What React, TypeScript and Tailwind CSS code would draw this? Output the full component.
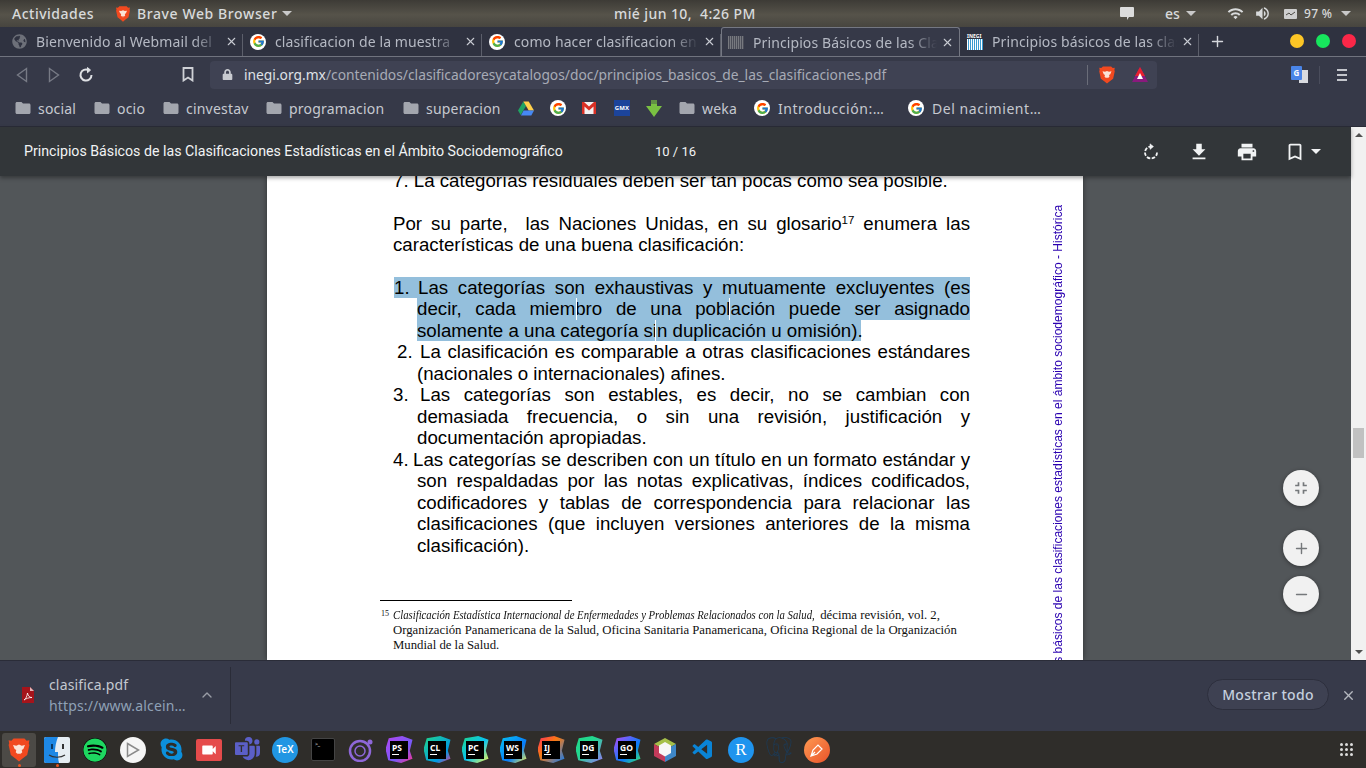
import React from 'react';
import { ChevronUp, Plus, Minus, X } from 'lucide-react';
import { FcGoogle } from 'react-icons/fc';
import { FaGlobeAmericas, FaSpotify, FaSkype, FaLock } from 'react-icons/fa';
import { BsMicrosoftTeams } from 'react-icons/bs';
import { MdFolder, MdWifi, MdVolumeUp, MdFileDownload, MdPrint, MdBookmarkBorder, MdFullscreenExit, MdVideocam } from 'react-icons/md';
import { SiPostgresql } from 'react-icons/si';
import { VscVscode } from 'react-icons/vsc';

const BraveIcon = ({ size, className }: { size: number; className?: string }) => (
  <svg width={size} height={size} viewBox="0 0 20 22" className={className}>
    <path d="M5 0.500h10l2 2 2.500-0.500-0.500 3 0.500 1.500-2 9-4.500 3.500L10 21.500 7 19 2.500 15.500l-2-9L1 5 0.500 2 3 2.500z" fill="#f1491f" />
    <path d="M4.500 6.500l3 0.500L10 6l2.500 1 3-0.500-1.500 3.500-1.500 1 0.500 2-3 3-3-3 0.500-2-1.500-1z" fill="#fbe3d6" />
    <path d="M8 14.500h4L10 17z" fill="#f1491f" />
  </svg>
);

const GoogleIcon = () => (
  <span className="flex h-4 w-4 shrink-0 items-center justify-center rounded-full bg-white">
    <FcGoogle size={13} />
  </span>
);

const InegiIcon = ({ muted }: { muted?: boolean }) => (
  <span className="flex h-4 w-4 shrink-0 flex-col">
    {!muted && <span className="text-[5px] leading-[5px] font-bold text-white">INEGI</span>}
    <span className={muted ? 'mt-[2px] h-[13px] w-4 bg-[repeating-linear-gradient(90deg,#77797f_0,#77797f_1px,#4b4d58_1px,#4b4d58_2px)]' : 'h-[11px] w-4 bg-[repeating-linear-gradient(90deg,#ffffff_0,#ffffff_1px,#3a9bd0_1px,#3a9bd0_2px)]'} />
  </span>
);

const tabs = [
  { title: 'Bienvenido al Webmail del', icon: <FaGlobeAmericas size={15} className="text-[#6d7079]" /> },
  { title: 'clasificacion de la muestra', icon: <GoogleIcon /> },
  { title: 'como hacer clasificacion en', icon: <GoogleIcon /> },
  { title: 'Principios Básicos de las Cla', icon: <InegiIcon muted />, active: true },
  { title: 'Principios básicos de las clas', icon: <InegiIcon /> },
];

const tabsDivider = <span className="absolute right-0 bottom-0 h-[22px] w-px bg-[#5c5f6b]" />;

const Tab = ({ title, icon, active }: { title: string; icon: React.ReactNode; active?: boolean }) => (
  <div className={`relative flex h-full w-[239px] shrink-0 items-center pr-[5px] ${active ? 'z-10 -mb-px h-[30px] self-start rounded-t-[3px] border border-b-0 border-[#747782] bg-[#363948] pl-[6px]' : 'pl-[7px]'}`}>
    {!active && tabsDivider}
    <span className="flex w-4 shrink-0 justify-center">{icon}</span>
    <span className="ml-[9px] min-w-0 flex-1 overflow-hidden whitespace-nowrap text-[14px] tracking-[0.1px] text-[#b5b9c3] [mask-image:linear-gradient(90deg,#000_85%,transparent_100%)]">
      {title}
    </span>
    <X size={13} strokeWidth={2} className="ml-1 text-[#c9ccd3]" />
  </div>
);

const bookmarkRow: { label?: string; kind: string; w: number; wide?: boolean }[] = [
  { label: 'social', kind: 'folder', w: 79 },
  { label: 'ocio', kind: 'folder', w: 69 },
  { label: 'cinvestav', kind: 'folder', w: 103 },
  { label: 'programacion', kind: 'folder', w: 137 },
  { label: 'superacion', kind: 'folder', w: 116 },
  { kind: 'drive', w: 32 },
  { kind: 'google', w: 32 },
  { kind: 'gmail', w: 32 },
  { kind: 'gmx', w: 32 },
  { kind: 'arrow', w: 32 },
  { label: 'weka', kind: 'folder', w: 76 },
  { label: 'Introducción:…', kind: 'google', w: 154, wide: true },
  { label: 'Del nacimient…', kind: 'google', w: 150, wide: true },
];

const BookmarkIcon = ({ kind }: { kind: string }) => {
  if (kind === 'folder') return <MdFolder size={18} className="shrink-0 text-[#a3a6ae]" />;
  if (kind === 'google') return <GoogleIcon />;
  if (kind === 'drive')
    return (
      <svg width="16" height="15" viewBox="0 0 16 15" className="shrink-0">
        <polygon points="5.3,0.5 8,5 2.700,14 0,9.500" fill="#1fa463" />
        <polygon points="5.4,0.5 10.7,0.5 16,9.500 10.700,9.500" fill="#ffd04b" />
        <polygon points="2.900,14.500 5.600,9.500 16,9.500 13.300,14.500" fill="#4688f4" />
      </svg>
    );
  if (kind === 'gmail')
    return (
      <svg width="14" height="12" viewBox="0 0 14 12" className="shrink-0">
        <rect width="14" height="12" fill="#f2f2f2" />
        <path d="M0 0h2l5 4.500L12 0h2v12h-2.500V4.600L7 8.400 2.500 4.600V12H0z" fill="#d93025" />
      </svg>
    );
  if (kind === 'gmx')
    return <span className="flex h-4 w-4 shrink-0 items-center justify-center bg-[#1c449b] text-[6px] font-bold text-white">GMX</span>;
  return (
    <svg width="16" height="17" viewBox="0 0 16 17" className="shrink-0">
      <path d="M5 0h6v6h5l-8 11L0 6h5z" fill="#7ac142" />
      <path d="M3 3h10M3 1h10" stroke="#383b49" strokeWidth="0.7" />
    </svg>
  );
};

const Line = ({ children, left = 0, justify = true, selected }: { children: React.ReactNode; left?: number; justify?: boolean; selected?: boolean }) => (
  <div
    className={`relative h-[21.5px] whitespace-pre text-[18.7px] leading-[21.5px] text-black ${justify ? '[text-align-last:justify]' : ''} ${selected ? 'bg-[#94bfdc]' : ''}`}
    style={{ marginLeft: left }}
  >
    {children}
  </div>
);

const JetIcon = ({ label, bg }: { label: string; bg: string }) => (
  <span className="relative flex h-[27px] w-[27px] items-center justify-center">
    <span className={`absolute inset-0 [clip-path:polygon(12%_8%,62%_0,100%_14%,90%_55%,100%_84%,58%_100%,10%_90%,0_48%)] ${bg}`} />
    <span className="relative flex h-[18px] w-[18px] flex-col bg-black px-[2px] pt-[2px] text-[8.5px] leading-[9px] font-bold text-white">
      {label}
      <span className="mt-[2px] h-px w-[7px] bg-white" />
    </span>
  </span>
);

const dockIcons: React.ReactNode[] = [
  <BraveIcon size={24} />,
  <svg width="26" height="26" viewBox="0 0 26 26">
    <rect width="26" height="26" rx="2" fill="#e6edf2" />
    <path d="M2 0h12c-2 5-3 10-3 15h3c0 4 0 7 1 11H2a2 2 0 0 1-2-2V2a2 2 0 0 1 2-2z" fill="#1e88e5" />
    <rect x="7" y="7" width="2" height="5" fill="#0b3a66" />
    <rect x="18" y="7" width="2" height="5" fill="#333" />
    <path d="M5 18c4 3 12 3 16 0" stroke="#333" strokeWidth="1.200" fill="none" />
  </svg>,
  <FaSpotify size={24} className="rounded-full bg-black text-[#1ed760]" />,
  <span className="flex h-[26px] w-[26px] items-center justify-center rounded-full bg-[#f5f5f5]">
    <svg width="14" height="16" viewBox="0 0 14 16"><path d="M1.500 1.500L12.500 8 1.500 14.500z" fill="none" stroke="#8a8a8a" strokeWidth="1.500" /></svg>
  </span>,
  <FaSkype size={25} className="text-[#0c8fdb]" />,
  <span className="flex h-[22px] w-[26px] items-center justify-center rounded-[2px] bg-[#e54b4b]"><MdVideocam size={18} className="text-white" /></span>,
  <BsMicrosoftTeams size={25} className="text-[#5b5fc7]" />,
  <span className="flex h-[26px] w-[26px] items-center justify-center rounded-full bg-[#2196e3] text-[10px] font-semibold text-white">TeX</span>,
  <span className="flex h-[23px] w-[24px] items-start rounded-[2px] border border-[#444] bg-black pl-[3px] pt-[3px]"><span className="text-[5px] leading-[5px] text-white">&gt;_</span></span>,
  <svg width="26" height="24" viewBox="0 0 26 24">
    <circle cx="12" cy="13" r="10" fill="none" stroke="#8e67d8" strokeWidth="2.500" />
    <circle cx="12" cy="13" r="5" fill="none" stroke="#8e67d8" strokeWidth="1.500" />
    <circle cx="22" cy="4" r="2.500" fill="#8e67d8" />
  </svg>,
  <JetIcon label="PS" bg="bg-[linear-gradient(135deg,#b345f1,#765af8_60%,#ff318c)]" />,
  <JetIcon label="CL" bg="bg-[linear-gradient(135deg,#21d789,#009ae5_70%,#ed358c)]" />,
  <JetIcon label="PC" bg="bg-[linear-gradient(135deg,#21d789,#07c3f2_50%,#fcf84a)]" />,
  <JetIcon label="WS" bg="bg-[linear-gradient(135deg,#07c3f2,#087cfa_60%,#fcf84a)]" />,
  <JetIcon label="IJ" bg="bg-[linear-gradient(135deg,#fe315d,#f97a12_40%,#087cfa)]" />,
  <JetIcon label="DG" bg="bg-[linear-gradient(135deg,#21d789,#22d88f_40%,#9775f8)]" />,
  <JetIcon label="GO" bg="bg-[linear-gradient(135deg,#b74af7,#087cfa_60%,#3bea62)]" />,
  <svg width="24" height="26" viewBox="0 0 24 26">
    <polygon points="12,1 23,7 12,13 1,7" fill="#a6c04a" />
    <polygon points="1,7 12,13 12,25 1,19" fill="#c23a5a" />
    <polygon points="23,7 12,13 12,25 23,19" fill="#3e87c9" />
    <polygon points="12,5 18,8.500 18,16 12,19.500 6,16 6,8.500" fill="#f7f7f7" />
  </svg>,
  <VscVscode size={24} className="text-[#0a84d6]" />,
  <span className="flex h-[26px] w-[26px] items-center justify-center rounded-full bg-[#1f94ee] font-['Liberation_Serif',serif] text-[17px] text-white">R</span>,
  <SiPostgresql size={26} className="text-[#1d3a55]" />,
  <span className="flex h-[26px] w-[26px] items-center justify-center rounded-full bg-[linear-gradient(135deg,#ff9a52,#e9532a)]">
    <svg width="18" height="18" viewBox="0 0 18 18"><path d="M3 15l2-6 5-5 4 4-5 5z M3 15l4-4" stroke="#fff" strokeWidth="1.200" fill="none" /></svg>
  </span>,
];

const App = () => {
  return (
    <div className="flex h-[768px] w-[1366px] flex-col overflow-hidden bg-[#363948] font-['Noto_Sans',sans-serif]">
      {/* gnome top bar */}
      <div className="flex h-[27px] shrink-0 items-center bg-[linear-gradient(180deg,#3d3b36,#56534a_55%,#47453f)] text-[14px] font-medium text-[#d8dadb]">
        <span className="ml-3 w-[83px] tracking-[0.5px]">Actividades</span>
        <BraveIcon size={16} className="ml-5" />
        <span className="ml-[6px] w-[140px] whitespace-nowrap tracking-[0.6px]">Brave Web Browser</span>
        <span className="ml-[5px] h-0 w-0 border-x-[5px] border-t-[5px] border-x-transparent border-t-[#c9c9c9]" />
        <span className="ml-[322px] w-[138px] whitespace-pre text-center tracking-[0.4px]">mié jun 10,  4:26 PM</span>
        <svg width="16" height="16" viewBox="0 0 16 16" className="ml-[367px] text-[#dcdcdc]">
          <path d="M2 1h12a1 1 0 0 1 1 1v8a1 1 0 0 1-1 1h-4l-2 3v-3H2a1 1 0 0 1-1-1V2a1 1 0 0 1 1-1z" fill="currentColor" />
        </svg>
        <span className="ml-[30px] w-[16px]">es</span>
        <span className="ml-[5px] h-0 w-0 border-x-[5px] border-t-[5px] border-x-transparent border-t-[#c9c9c9]" />
        <MdWifi size={17} className="ml-[31px]" />
        <MdVolumeUp size={17} className="ml-[10px]" />
        <svg width="14" height="10" viewBox="0 0 14 10" className="ml-[13px]">
          <rect width="13" height="10" rx="1" fill="#cfcfcf" />
          <path d="M2 6l3-2 2 2 4-3" stroke="#4d4b45" fill="none" />
        </svg>
        <span className="ml-[6px] whitespace-nowrap text-[12px] tracking-[0.3px]">97 %</span>
        <span className="ml-[9px] h-0 w-0 border-x-[5px] border-t-[5px] border-x-transparent border-t-[#c9c9c9]" />
      </div>

      {/* tabs */}
      <div className="flex h-[30px] shrink-0 items-end border-b border-[#70737e] bg-[#2f3240] pl-[4px]">
        {tabs.map((tab) => (
          <Tab key={tab.title} title={tab.title} icon={tab.icon} active={tab.active} />
        ))}
        <Plus size={17} strokeWidth={2} className="mb-[6px] ml-[10px] text-[#d5d7dc]" />
        <div className="mb-[8px] ml-auto flex gap-3 pr-[10px]">
          <span className="h-[14px] w-[14px] rounded-full bg-[#fdc626]" />
          <span className="h-[14px] w-[14px] rounded-full bg-[#17e65d]" />
          <span className="h-[14px] w-[14px] rounded-full bg-[#fb2748]" />
        </div>
      </div>

      {/* address bar */}
      <div className="flex h-[35px] shrink-0 items-center">
        <svg width="12" height="16" viewBox="0 0 12 16" className="ml-[16px]" fill="none" stroke="#777a85" strokeWidth="1.400">
          <path d="M10.500 1.500v13L1.500 8z" />
        </svg>
        <svg width="12" height="16" viewBox="0 0 12 16" className="ml-[20px]" fill="none" stroke="#777a85" strokeWidth="1.400">
          <path d="M1.500 1.500v13l9-6.500z" />
        </svg>
        <svg width="16" height="16" viewBox="0 0 16 16" className="ml-[18px]" fill="none" stroke="#dfe1e5" strokeWidth="2">
          <path d="M13.500 8A5.500 5.500 0 1 1 10.500 3.100" />
          <path d="M9.500 0.500l3 2.600-3 2.600z" fill="#dfe1e5" strokeWidth="1" />
        </svg>
        <svg width="12" height="15" viewBox="0 0 12 15" className="ml-[88px]" fill="none" stroke="#cfd1d6" strokeWidth="1.800">
          <path d="M1.500 1h9v12.500L6 10.500l-4.500 3z" />
        </svg>
        <div className="ml-[16px] flex h-[28px] w-[947px] items-center rounded-[4px] bg-[#3f4253]">
          <FaLock size={11} className="ml-[12px] text-[#c8cad0]" />
          <span className="ml-[11px] w-[643px] whitespace-nowrap pt-px text-[13.8px] text-[#a7abb6]">
            <span className="text-[#dfe1e6]">inegi.org.mx</span>/contenidos/clasificadoresycatalogos/doc/principios_basicos_de_las_clasificaciones.pdf
          </span>
          <span className="ml-[200px] h-[20px] w-px bg-[#6a6d79]" />
          <BraveIcon size={18} className="ml-[10px]" />
          <svg width="18" height="18" viewBox="0 0 18 18" className="ml-[15px]">
            <polygon points="9,1 17,16 1,16" fill="#8a1a7d" />
            <polygon points="9,1 14,10 4,10" fill="#e8202f" />
            <polygon points="9,7 12,13 6,13" fill="#fff" />
          </svg>
        </div>
        <span className="relative ml-[134px] flex h-[17px] w-[17px] items-center justify-center">
          <span className="absolute right-0 bottom-0 h-[13px] w-[9px] bg-[#d9dbe0]" />
          <span className="absolute top-0 left-0 h-[14px] w-[11px] rounded-[1px] bg-[#4a85e8] text-center text-[8px] leading-[14px] font-bold text-white">G</span>
        </span>
        <span className="ml-[11px] h-[18px] w-px bg-[#4a4d5c]" />
        <span className="ml-[17px] flex w-[10px] flex-col gap-[3px]">
          <span className="h-[2px] bg-[#c4c6cc]" />
          <span className="h-[2px] bg-[#c4c6cc]" />
          <span className="h-[2px] bg-[#c4c6cc]" />
        </span>
      </div>

      {/* bookmarks */}
      <div className="flex h-[35px] shrink-0 items-center border-b border-[#2a2c38] pb-[2px] pl-[13px] text-[14px] tracking-[0.2px] text-[#c6c9d0]">
        {bookmarkRow.map((b, i) => (
          <div key={i} className="flex shrink-0 items-center gap-[6px] pl-[1px]" style={{ width: b.w }}>
            <BookmarkIcon kind={b.kind} />
            {b.label && <span className={`whitespace-nowrap ${b.wide ? 'ml-[2px] tracking-[0.55px]' : ''}`}>{b.label}</span>}
          </div>
        ))}
      </div>

      {/* pdf viewer */}
      <div className="flex min-h-0 flex-1">
        <div className="relative flex min-w-0 flex-1 flex-col">
          <div className="relative z-10 flex h-[49px] shrink-0 items-center bg-[#323639] pl-6 font-['Roboto',sans-serif] text-[13px] text-[#f1f3f4] shadow-[0_2px_4px_rgba(0,0,0,0.35)]">
            <span className="w-[631px] whitespace-nowrap text-[14.2px]">Principios Básicos de las Clasificaciones Estadísticas en el Ámbito Sociodemográfico</span>
            <span className="w-[40px] whitespace-nowrap">10 / 16</span>
            <svg width="18" height="18" viewBox="0 0 18 18" className="ml-[447px]" fill="none" stroke="#f1f3f4" strokeWidth="1.800">
              <path d="M15 9.500A6 6 0 1 1 8 3.600" strokeDasharray="3.500 1.500" />
              <path d="M8 0.800l3.500 2.800L8 6.400z" fill="#f1f3f4" strokeWidth="0.500" />
            </svg>
            <MdFileDownload size={22} className="ml-[28px] text-[#f1f3f4]" />
            <MdPrint size={22} className="ml-[26px] text-[#f1f3f4]" />
            <MdBookmarkBorder size={22} className="ml-[26px] text-[#f1f3f4]" />
            <span className="ml-[5px] h-0 w-0 border-x-[5px] border-t-[5px] border-x-transparent border-t-[#f1f3f4]" />
          </div>

          <div className="flex min-h-0 flex-1 justify-center overflow-hidden bg-[#525659] pr-px">
            <div className="flex h-full w-[816px] shrink-0 bg-white pl-[126px] shadow-[0_0_6px_rgba(0,0,0,0.45)]">
              <div className="-mt-[6px] w-[577px] shrink-0 font-['Liberation_Sans',sans-serif]">
                <Line justify={false}>7. La categorías residuales deben ser tan pocas como sea posible.</Line>
                <div className="mt-[21px]">
                  <Line>Por su parte,  las Naciones Unidas, en su glosario<sup className="text-[11.5px]">17</sup> enumera las</Line>
                  <Line justify={false}>características de una buena clasificación:</Line>
                </div>
                <div className="mt-[21px]">
                  <div className="relative ml-px flex h-[21.5px] bg-[#94bfdc] text-[18.7px] leading-[21.5px] whitespace-pre text-black">
                    <span className="w-[24px] shrink-0">1.</span>
                    <span className="flex-1 [text-align-last:justify]">Las categorías son exhaustivas y mutuamente excluyentes (es</span>
                  </div>
                  <Line left={24} selected>
                    decir, cada miembro de una población puede ser asignado
                    <span className="absolute top-0 left-[159px] h-full w-px bg-white" />
                    <span className="absolute top-0 left-[312px] h-full w-px bg-white" />
                  </Line>
                  <div className="ml-[24px] h-[21.5px] w-[444px] bg-[#94bfdc]">
                    <Line justify={false}>
                      solamente a una categoría sin duplicación u omisión).
                      <span className="absolute top-0 left-[238px] h-full w-px bg-white" />
                    </Line>
                  </div>
                  <div className="flex h-[21.5px] text-[18.7px] leading-[21.5px] whitespace-pre">
                    <span className="w-[27px] shrink-0 pl-[4px]">2.</span>
                    <span className="flex-1 [text-align-last:justify]">La clasificación es comparable a otras clasificaciones estándares</span>
                  </div>
                  <Line left={24} justify={false}>(nacionales o internacionales) afines.</Line>
                  <div className="flex h-[21.5px] text-[18.7px] leading-[21.5px] whitespace-pre">
                    <span className="w-[27px] shrink-0">3.</span>
                    <span className="flex-1 [text-align-last:justify]">Las categorías son estables, es decir, no se cambian con</span>
                  </div>
                  <Line left={24}>demasiada frecuencia, o sin una revisión, justificación y</Line>
                  <Line left={24} justify={false}>documentación apropiadas.</Line>
                  <div className="flex h-[21.5px] text-[18.7px] leading-[21.5px] whitespace-pre">
                    <span className="w-[20px] shrink-0">4.</span>
                    <span className="flex-1 [text-align-last:justify]">Las categorías se describen con un título en un formato estándar y</span>
                  </div>
                  <Line left={24}>son respaldadas por las notas explicativas, índices codificados,</Line>
                  <Line left={24}>codificadores y tablas de correspondencia para relacionar las</Line>
                  <Line left={24}>clasificaciones (que incluyen versiones anteriores de la misma</Line>
                  <Line left={24} justify={false}>clasificación).</Line>
                </div>
                <div className="mt-[44px] -ml-[13px] h-px w-[192px] bg-black" />
                <div className="mt-[7px] -ml-[12px] w-[590px] font-['Liberation_Serif',serif] text-[12.75px] leading-[15px] text-[#111]">
                  <div className="flex">
                    <span className="w-[12px] shrink-0 text-[8px] leading-[11px]">15</span>
                    <span className="whitespace-nowrap"><i className="inline-block w-[424px] origin-left scale-x-[0.88] text-[12.2px]">Clasificación Estadística Internacional de Enfermedades y Problemas Relacionados con la Salud,</i> décima revisión, vol. 2,</span>
                  </div>
                  <div className="ml-[12px] whitespace-nowrap">Organización Panamericana de la Salud, Oficina Sanitaria Panamericana, Oficina Regional de la Organización</div>
                  <div className="ml-[12px]">Mundial de la Salud.</div>
                </div>
              </div>
              <div className="mt-[29px] ml-[81px] flex h-[455px] w-[14px] shrink-0 rotate-180 justify-end overflow-hidden font-['Liberation_Sans',sans-serif] text-[12.05px] leading-[14px] whitespace-pre text-[#2a00b0] [writing-mode:vertical-rl]">
                Principios básicos de las clasificaciones estadísticas en el ámbito sociodemográfico - Histórica
              </div>
            </div>
          </div>

          {/* zoom buttons */}
          <div className="absolute top-[343px] left-[1283px] flex h-9 w-9 items-center justify-center rounded-full bg-[#f1f1f1] shadow-[0_1px_4px_rgba(0,0,0,0.4)]">
            <MdFullscreenExit size={20} className="text-[#75787b]" />
          </div>
          <div className="absolute top-[403px] left-[1283px] flex h-9 w-9 items-center justify-center rounded-full bg-[#f1f1f1] shadow-[0_1px_4px_rgba(0,0,0,0.4)]">
            <Plus size={17} strokeWidth={2} className="text-[#75787b]" />
          </div>
          <div className="absolute top-[449px] left-[1283px] flex h-9 w-9 items-center justify-center rounded-full bg-[#f1f1f1] shadow-[0_1px_4px_rgba(0,0,0,0.4)]">
            <Minus size={17} strokeWidth={2} className="text-[#75787b]" />
          </div>
        </div>

        {/* scrollbar */}
        <div className="flex w-[15px] shrink-0 flex-col items-center bg-[#f1f1f1] pt-[6px]">
          <span className="h-0 w-0 border-x-[4px] border-b-[4px] border-x-transparent border-b-[#505050]" />
          <span className="mt-[291px] h-[30px] w-[11px] bg-[#c1c1c1]" />
          <span className="mt-[192px] h-0 w-0 border-x-[4px] border-t-[4px] border-x-transparent border-t-[#505050]" />
        </div>
      </div>

      {/* downloads shelf */}
      <div className="flex h-[71px] shrink-0 items-center border-t border-[#2a2c38] bg-[#373a4a] pb-[2px]">
        <svg width="12" height="16" viewBox="0 0 12 16" className="ml-[22px]">
          <path d="M0 0h8l4 4v12H0z" fill="#a5141b" />
          <path d="M8 0l4 4H8z" fill="#e8b4b6" />
          <path d="M2 13c2-1 3-4 3.500-7 0.500 3 2 4.500 4.500 4.500-3 0-6 1-8 2.500z" fill="none" stroke="#fff" strokeWidth="0.800" />
        </svg>
        <div className="ml-[15px] w-[140px] text-[14px] leading-[21px] tracking-[0.15px]">
          <div className="text-[#c4c8d0]">clasifica.pdf</div>
          <div className="whitespace-nowrap text-[#8fa1b6]">https://www.alcein…</div>
        </div>
        <ChevronUp size={16} className="ml-[10px] text-[#9a9da6]" />
        <span className="ml-[15px] h-[57px] w-px bg-[#2a2c38]" />
        <div className="mb-[2px] ml-auto flex h-[31px] w-[122px] items-center justify-center rounded-full border border-[#2d2f3d] bg-[#3e4152] text-[14px] font-medium tracking-[0.3px] text-[#c5d0de]">
          Mostrar todo
        </div>
        <X size={15} strokeWidth={2.2} className="mr-[10px] ml-[12px] text-[#b5b8bf]" />
      </div>

      {/* dock */}
      <div className="flex h-[37px] shrink-0 items-center bg-[#2f2d2a]">
        {dockIcons.map((icon, i) => (
          <div key={i} className="relative flex h-full w-[38px] shrink-0 items-center justify-center">
            {i === 0 && <span className="absolute top-[2px] left-[2px] h-[34px] w-[34px] rounded-[3px] bg-[#4c4a46]" />}
            <span className="relative flex items-center justify-center">{icon}</span>
            {i < 2 && <span className="absolute bottom-[1px] left-[18px] h-[3px] w-[3px] rounded-full bg-[#e95420]" />}
          </div>
        ))}
        <div className="mr-[13px] ml-auto grid grid-cols-3 gap-[2px]">
          {Array.from({ length: 9 }).map((_, i) => (
            <span key={i} className="h-[3px] w-[3px] rounded-full bg-[#dcdcdc]" />
          ))}
        </div>
      </div>
    </div>
  );
};

export default App;
